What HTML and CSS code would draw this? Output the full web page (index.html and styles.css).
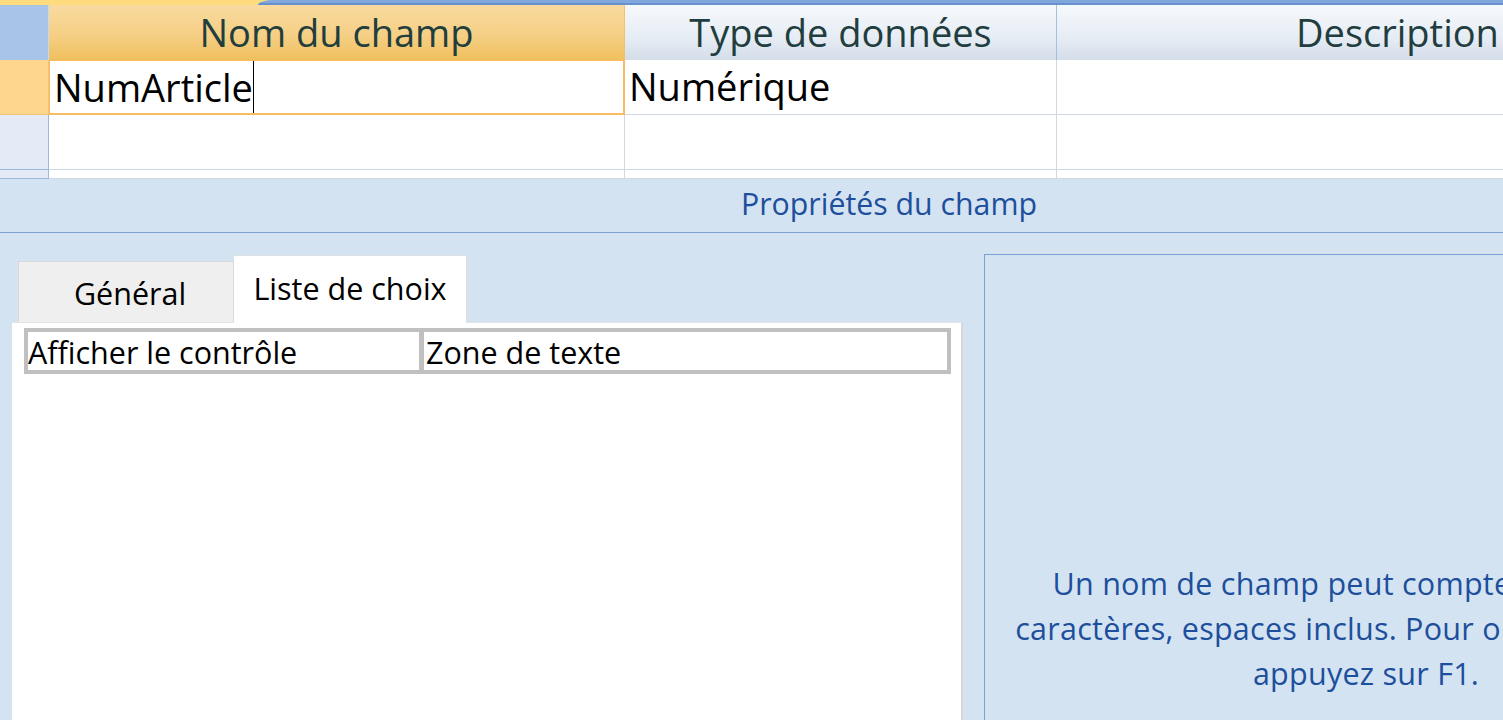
FILE: index.html
```html
<!DOCTYPE html>
<html lang="fr">
<head>
<meta charset="utf-8">
<title>Création de table</title>
<link rel="stylesheet" href="styles.css">
</head>
<body>
<div class="topbar"><div class="topbar-blue"></div></div>
<div class="grid">
  <div class="sel sel-head"></div>
  <div class="hcell hcell-active">Nom du champ</div>
  <div class="hcell">Type de données</div>
  <div class="hcell hcell-last">Description</div>

  <div class="sel sel-current"></div>
  <div class="cell cell-edit">NumArticle<span class="caret"></span></div>
  <div class="cell">Numérique</div>
  <div class="cell cell-last"></div>

  <div class="sel"></div>
  <div class="cell"></div>
  <div class="cell"></div>
  <div class="cell cell-last"></div>

  <div class="sel"></div>
  <div class="cell"></div>
  <div class="cell"></div>
  <div class="cell cell-last"></div>
</div>
<div class="props">
  <div class="props-title">Propriétés du champ</div>
  <div class="props-body">
    <div class="props-left">
      <div class="tabs">
        <div class="tab">Général</div>
        <div class="tab tab-active">Liste de choix</div>
      </div>
      <div class="panel">
        <div class="prop-row">
          <div class="prop-name">Afficher le contrôle</div>
          <div class="prop-value">Zone de texte</div>
        </div>
      </div>
    </div>
    <div class="help">
      <p class="help-text">Un nom de champ peut compter jusqu'à 64<br>caractères, espaces inclus. Pour obtenir de l'aide<br>appuyez sur F1.</p>
    </div>
  </div>
</div>
</body>
</html>
```

FILE: styles.css
```css
html, body {
  margin: 0;
  padding: 0;
}
body {
  width: 1503px;
  height: 720px;
  overflow: hidden;
  background: #d4e3f2;
  font-family: "Open Sans", "Noto Sans", sans-serif;
}

.topbar {
  height: 5px;
  background: #fedc7e;
  display: flex;
}
.topbar-blue {
  margin-left: 258px;
  flex: 1;
  background: linear-gradient(#80a8dc, #80a8dc 3px, #6790cc 3px);
  border-top-left-radius: 16px 5px;
}

.grid {
  display: grid;
  grid-template-columns: 49px 576px 432px 446px;
  grid-template-rows: 55px 55px 55px 9px;
  width: 1503px;
  overflow: hidden;
  background: #fff;
}

.sel {
  background: #e4ebf6;
  border-right: 1px solid #9cb9dc;
  border-bottom: 1px solid #9cb9dc;
  box-sizing: border-box;
}
.sel-head {
  background: #a9c4e9;
  border-right: 1px solid #c9d8ec;
  border-bottom: none;
}
.sel-current {
  background: #fed68d;
  border-right-color: #f3c272;
  border-bottom-color: #f6c577;
}

.hcell {
  box-sizing: border-box;
  background: linear-gradient(#f6f9fc, #e6ecf4 60%, #d3dde9);
  border-right: 1px solid #a6bfdf;
  color: #223d3d;
  font-size: 38px;
  line-height: 55px;
  text-align: center;
  white-space: nowrap;
  overflow: hidden;
}
.hcell-active {
  background: linear-gradient(#f9da9f, #f5cf85 55%, #f0c05e);
  border-right: 1px solid #f0c466;
}
.hcell-last {
  border-right: none;
  text-align: left;
  padding-left: 239px;
}

.cell {
  box-sizing: border-box;
  border-right: 1px solid #d0d8e4;
  border-bottom: 1px solid #d0d8e4;
  background: #fff;
  color: #000;
  font-size: 38px;
  line-height: 53px;
  padding-left: 4px;
  white-space: nowrap;
  overflow: hidden;
}
.cell-last {
  border-right: none;
}
.cell-edit {
  border: 1px solid #f8bb62;
  border-bottom-width: 2px;
  border-right-width: 2px;
  line-height: 53px;
  padding-left: 4px;
}
.caret {
  display: inline-block;
  width: 1px;
  height: 52px;
  background: #000;
  vertical-align: top;
  margin-left: 0;
}

.props {
  overflow: hidden;
}

.props-title {
  height: 53px;
  line-height: 50px;
  padding-left: 275px;
  border-bottom: 1px solid #7c9fd6;
  text-align: center;
  color: #1d4f9c;
  font-size: 30.3px;
  white-space: nowrap;
}

.props-body {
  display: flex;
  padding-left: 12px;
  overflow: hidden;
  height: 487px;
}

.props-left {
  width: 951px;
  flex: none;
  margin-top: 22px;
  display: flex;
  flex-direction: column;
}

.tabs {
  display: flex;
  align-items: flex-end;
  padding-left: 6px;
  height: 67px;
  position: relative;
  z-index: 1;
}
.tab {
  box-sizing: border-box;
  width: 216px;
  height: 61px;
  background: #efefef;
  border: 1px solid #d9d9d9;
  border-bottom: none;
  font-size: 30.5px;
  line-height: 40px;
  padding-top: 11px;
  padding-left: 8px;
  text-align: center;
  color: #000;
  white-space: nowrap;
}
.tab-active {
  width: 233px;
  height: 68px;
  margin-bottom: -1px;
  background: #fff;
  border-color: #dedede;
  border-left: none;
  padding-left: 0;
  padding-top: 12px;
}

.panel {
  flex: 1;
  background: #fff;
  border-top: 1px solid #e4e4e4;
  border-right: 2px solid #d8d8d8;
  padding: 5px 10px 0 12px;
}

.prop-row {
  display: flex;
  border: 4px solid #c0c0c0;
  height: 38px;
  font-size: 30.5px;
  line-height: 40px;
  color: #000;
  white-space: nowrap;
  overflow: hidden;
}
.prop-name {
  width: 391px;
  border-right: 5px solid #c0c0c0;
  padding-left: 0;
}
.prop-value {
  flex: 1;
  padding-left: 2px;
}

.help {
  flex: none;
  width: 762px;
  margin-left: 21px;
  margin-top: 21px;
  border: 1px solid #7c9fd6;
  border-right: none;
  border-bottom: none;
}
.help-text {
  margin: 0;
  padding-top: 306px;
  text-align: center;
  color: #1d4f9c;
  font-size: 30.5px;
  letter-spacing: 0.25px;
  line-height: 45px;
  white-space: nowrap;
}
```
